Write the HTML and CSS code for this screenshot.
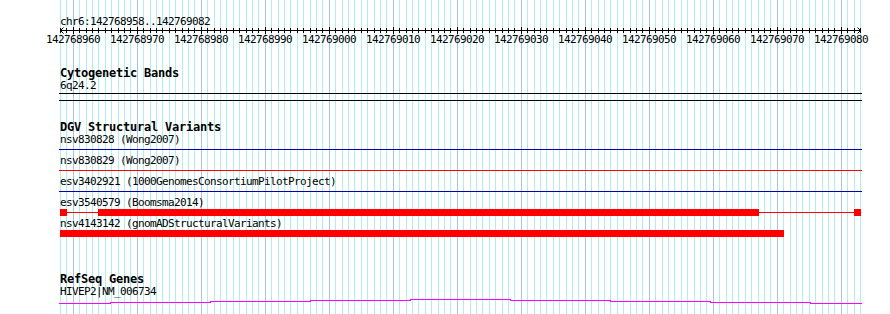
FILE: index.html
```html
<!DOCTYPE html>
<html lang="en">
<head>
<meta charset="utf-8">
<title>Genome browser</title>
<link rel="stylesheet" href="styles.css">
</head>
<body>
<div class="page">
  <div class="grid" aria-hidden="true"></div>

  <div class="chr">chr6:142768958..142769082</div>

  <svg class="ruler" width="890" height="7" viewBox="0 0 890 7" aria-hidden="true">
    <defs>
      <pattern id="ticks" patternUnits="userSpaceOnUse" x="60" y="0" width="64" height="7">
        <rect x="0" y="1" width="1" height="5"/>
        <rect x="6" y="1" width="1" height="5"/>
        <rect x="13" y="0" width="1" height="7"/>
        <rect x="19" y="1" width="1" height="5"/>
        <rect x="26" y="1" width="1" height="5"/>
        <rect x="32" y="1" width="1" height="5"/>
        <rect x="38" y="1" width="1" height="5"/>
        <rect x="45" y="1" width="1" height="5"/>
        <rect x="51" y="1" width="1" height="5"/>
        <rect x="58" y="1" width="1" height="5"/>
      </pattern>
    </defs>
    <rect x="60" y="0" width="801" height="7" fill="url(#ticks)"/>
    <rect x="60" y="3" width="801" height="1"/>
    <path class="arrow" d="M63.5 0.5L60.5 3.5L63.5 6.5M857.5 0.5L860.5 3.5L857.5 6.5"/>
  </svg>

  <div class="labels">
    <span>142768960</span><span>142768970</span><span>142768980</span><span>142768990</span><span>142769000</span><span>142769010</span><span>142769020</span><span>142769030</span><span>142769040</span><span>142769050</span><span>142769060</span><span>142769070</span><span>142769080</span>
  </div>

  <section class="track track-cyto">
    <h2 class="track-title">Cytogenetic Bands</h2>
    <div class="row">
      <div class="feat-label">6q24.2</div>
      <div class="band"></div>
    </div>
  </section>

  <section class="track track-dgv">
    <h2 class="track-title">DGV Structural Variants</h2>
    <div class="row">
      <div class="feat-label">nsv830828 (Wong2007)</div>
      <div class="glyph"><div class="line line-blue"></div></div>
    </div>
    <div class="row">
      <div class="feat-label">nsv830829 (Wong2007)</div>
      <div class="glyph"><div class="line line-red"></div></div>
    </div>
    <div class="row">
      <div class="feat-label">esv3402921 (1000GenomesConsortiumPilotProject)</div>
      <div class="glyph"><div class="line line-blue"></div></div>
    </div>
    <div class="row">
      <div class="feat-label">esv3540579 (Boomsma2014)</div>
      <div class="glyph glyph-segments">
        <div class="block" style="width:7px"></div>
        <div class="intron" style="width:31px"></div>
        <div class="block" style="width:661px"></div>
        <div class="intron" style="width:95px"></div>
        <div class="block" style="width:7px"></div>
      </div>
    </div>
    <div class="row">
      <div class="feat-label">nsv4143142 (gnomADStructuralVariants)</div>
      <div class="glyph glyph-segments">
        <div class="block" style="width:724px"></div>
      </div>
    </div>
  </section>

  <section class="track track-refseq">
    <h2 class="track-title">RefSeq Genes</h2>
    <div class="row">
      <div class="feat-label">HIVEP2|NM_006734</div>
      <svg class="gene" width="803" height="7" viewBox="0 0 803 7" aria-hidden="true">
        <path d="M0 5.5H51V4.5H151V3.5H251V2.5H351V1.5H451V2.5H551V3.5H651V4.5H751V5.5H803"/>
      </svg>
    </div>
  </section>
</div>
</body>
</html>
```

FILE: styles.css
```css
html {
  margin: 0;
  padding: 0;
  background: #ffffff;
}

body {
  margin: 0;
  padding: 0;
  font-family: "DejaVu Sans Mono", "Liberation Mono", monospace;
  font-size: 11px;
  letter-spacing: -0.62px;
  color: #000000;
}

.page {
  position: relative;
  z-index: 0;
  width: 890px;
  height: 314px;
  overflow: hidden;
}

.grid {
  --minor: linear-gradient(90deg, #afeeee 1px, transparent 1px);
  --major: linear-gradient(90deg, #9fc6e6 1px, transparent 1px);
  position: absolute;
  top: 0;
  left: 60px;
  width: 801px;
  height: 314px;
  z-index: -1;
  background-image: var(--major), var(--minor), var(--minor), var(--minor), var(--minor),
    var(--minor), var(--minor), var(--minor), var(--minor), var(--minor);
  background-size: 64px 100%;
  background-repeat: repeat-x;
  background-position: 13px 0, 0 0, 6px 0, 19px 0, 26px 0, 32px 0, 38px 0, 45px 0, 51px 0, 58px 0;
}

.chr {
  margin: 16px 0 0 60px;
  height: 11px;
  line-height: 12px;
  white-space: nowrap;
}

.ruler {
  display: block;
  fill: #000000;
  shape-rendering: crispEdges;
}

.ruler .arrow {
  fill: none;
  stroke: #000000;
  stroke-width: 1;
  shape-rendering: auto;
}

.labels {
  display: flex;
  gap: 10px;
  padding-left: 46px;
  height: 12px;
  line-height: 12px;
  white-space: nowrap;
}

.labels span {
  flex: 0 0 54px;
  width: 54px;
}

.track {
  margin-left: 59px;
  width: 803px;
}

.track-cyto { margin-top: 21px; }
.track-dgv { margin-top: 20px; }
.track-refseq { margin-top: 34px; }

.track-title {
  margin: 0;
  padding-left: 1px;
  font-size: 12px;
  font-weight: bold;
  letter-spacing: -0.22px;
  line-height: 13px;
  height: 13px;
  white-space: nowrap;
}

.feat-label {
  padding-left: 1px;
  height: 12px;
  line-height: 12px;
  white-space: nowrap;
}

.band {
  box-sizing: border-box;
  margin-top: 1px;
  height: 8px;
  border-top: 1px solid #000000;
  border-bottom: 1px solid #000000;
}

.glyph {
  display: flow-root;
  height: 9px;
}

.line {
  margin-top: 3px;
  height: 1px;
}

.line-blue { background: #0000b0; }
.line-red { background: #ff0000; }

.glyph-segments {
  display: flex;
  align-items: flex-start;
  padding-left: 1px;
}

.block {
  flex: none;
  height: 7px;
  background: #ff0000;
}

.intron {
  flex: none;
  height: 1px;
  margin-top: 3px;
  background: #ff0000;
}

.gene {
  display: block;
  fill: none;
  stroke: #ff00ff;
  stroke-width: 1;
  shape-rendering: crispEdges;
}
```
